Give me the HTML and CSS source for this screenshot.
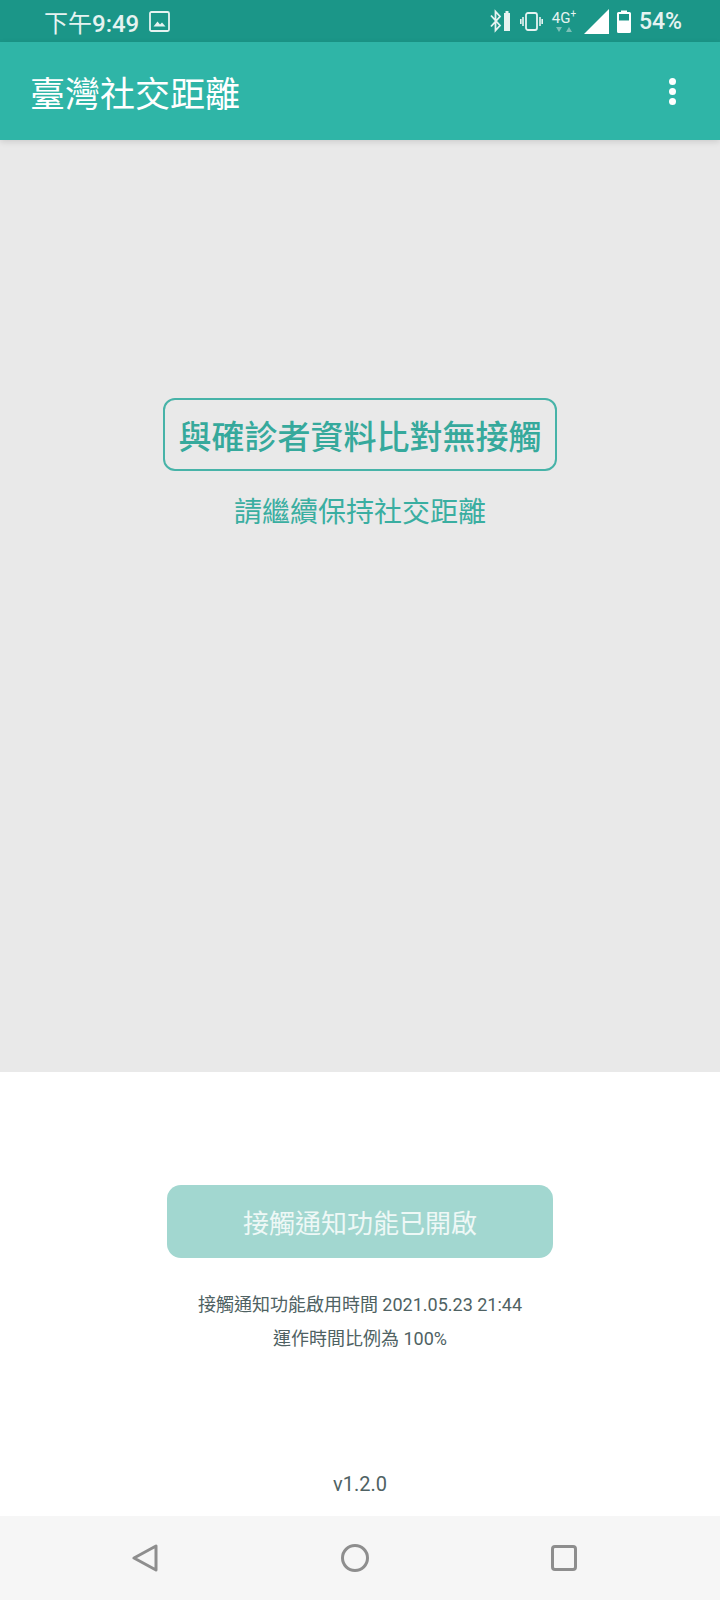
FILE: index.html
```html
<!DOCTYPE html>
<html lang="zh-Hant">
    <head>
        <meta charset="UTF-8">
        <meta name="viewport" content="width=device-width, initial-scale=1.0">
        <title>臺灣社交距離</title>
        <link rel="stylesheet" href="styles.css">
    </head>
    <body>
        <div class="status-bar">
            <div class="status-left">
                <span class="clock"><span class="clock-ampm">下午</span>9:49</span>
                <svg class="pic-icon" width="21" height="21" viewBox="0 0 21 21">
                    <rect x="1" y="1" width="19" height="19" rx="1.5" fill="none" stroke="#e6f3f1" stroke-width="1.8"/>
                    <path d="M4.5 15.5 L8.5 10.5 L11 13.5 L13 11.5 L16.5 15.5 Z" fill="#e6f3f1"/>
                </svg>
            </div>
            <div class="status-right">
                <svg width="21" height="24" viewBox="0 0 21 24">
                    <path d="M1 6.5 L10 16.5 L5.5 21.5 V2.5 L10 7.5 L1 17.5" fill="none" stroke="#e6f3f1" stroke-width="1.8"/>
                    <path d="M14 4 H15.5 V2 H18.5 V4 H20 V22 H14 Z" fill="#e6f3f1"/>
                </svg>
                <svg class="vibrate" width="23" height="19" viewBox="0 0 23 19">
                    <rect x="6" y="1" width="11" height="17" rx="2" fill="none" stroke="#e6f3f1" stroke-width="1.8"/>
                    <path d="M3 5 V14 M0.8 7 V12 M20 5 V14 M22.2 7 V12" stroke="#e6f3f1" stroke-width="1.6"/>
                </svg>
                <div class="net">
                    <span class="net-label">4G<sup>+</sup></span>
                    <svg width="16" height="6" viewBox="0 0 16 6">
                        <path d="M0 0 H6 L3 5 Z" fill="#7cc1b8"/>
                        <path d="M10 5 H16 L13 0 Z" fill="#7cc1b8"/>
                    </svg>
                </div>
                <svg class="signal" width="25" height="25" viewBox="0 0 25 25">
                    <path d="M25 0 V25 H0 Z" fill="#fff"/>
                </svg>
                <svg class="battery" width="14" height="23" viewBox="0 0 14 23">
                    <path d="M4 2 V0.5 H10 V2 H12.5 A1.5 1.5 0 0 1 14 3.5 V21.5 A1.5 1.5 0 0 1 12.5 23 H1.5 A1.5 1.5 0 0 1 0 21.5 V3.5 A1.5 1.5 0 0 1 1.500 2 Z" fill="#fff"/>
                    <rect x="2" y="4" width="10" height="6.5" fill="#1b9688"/>
                </svg>
                <span class="percent">54%</span>
            </div>
        </div>

        <div class="app-bar">
            <h1 class="app-title">臺灣社交距離</h1>
            <div class="menu">
                <span class="dot"></span>
                <span class="dot"></span>
                <span class="dot"></span>
            </div>
        </div>

        <div class="result-panel">
            <div class="result-box">與確診者資料比對無接觸</div>
            <p class="result-note">請繼續保持社交距離</p>
        </div>

        <div class="bottom-panel">
            <button class="notify-button" disabled>接觸通知功能已開啟</button>
            <p class="notify-info">接觸通知功能啟用時間 2021.05.23 21:44<br>運作時間比例為 100%</p>
            <p class="version">v1.2.0</p>
        </div>

        <div class="nav-bar">
            <svg width="26" height="28" viewBox="0 0 26 28">
                <path d="M2 14 L24 2 V26 Z" fill="none" stroke="#8e8e8e" stroke-width="3" stroke-linejoin="round"/>
            </svg>
            <svg width="28" height="28" viewBox="0 0 28 28">
                <circle cx="14" cy="14" r="12.500" fill="none" stroke="#8e8e8e" stroke-width="3"/>
            </svg>
            <svg width="26" height="26" viewBox="0 0 26 26">
                <rect x="1.500" y="1.500" width="23" height="23" rx="2.500" fill="none" stroke="#8e8e8e" stroke-width="3"/>
            </svg>
        </div>
    </body>
</html>
```

FILE: styles.css
```css
* {
    box-sizing: border-box;
}
body {
    font-family: Roboto, "Noto Sans CJK TC", sans-serif;
    margin: 0;
    width: 720px;
    height: 1600px;
    display: flex;
    flex-direction: column;
    background-color: #fff;
    overflow: hidden;
}
.status-bar {
    height: 42px;
    flex-shrink: 0;
    display: flex;
    justify-content: space-between;
    align-items: center;
    padding: 0 38px 0 44px;
    background-color: #1b9688;
    color: #e6f3f1;
}
.status-left {
    display: flex;
    align-items: center;
    gap: 10px;
}
.clock {
    font-size: 24px;
    font-weight: 500;
}
.clock-ampm {
    font-weight: 400;
}
.status-right {
    display: flex;
    align-items: center;
}
.vibrate {
    margin-left: 9px;
}
.net {
    display: flex;
    flex-direction: column;
    align-items: center;
    margin-left: 8px;
    width: 26px;
}
.net-label {
    font-size: 15px;
    line-height: 17px;
    white-space: nowrap;
}
.net-label sup {
    font-size: 10px;
    line-height: 0;
}
.signal {
    margin-left: 7px;
}
.battery {
    margin-left: 8px;
}
.percent {
    font-size: 23px;
    font-weight: 500;
    margin-left: 8px;
}
.app-bar {
    height: 98px;
    flex-shrink: 0;
    display: flex;
    justify-content: space-between;
    align-items: center;
    padding: 0 44px 0 30px;
    background-color: #2fb5a7;
    box-shadow: 0 2px 6px rgba(0, 0, 0, 0.12);
    position: relative;
}
.app-title {
    margin: 0;
    font-size: 35px;
    font-weight: 400;
    color: #fff;
}
.menu {
    display: flex;
    flex-direction: column;
    gap: 3px;
}
.dot {
    width: 7px;
    height: 7px;
    border-radius: 50%;
    background-color: #fff;
}
.result-panel {
    height: 932px;
    flex-shrink: 0;
    display: flex;
    flex-direction: column;
    align-items: center;
    padding-top: 258px;
    background-color: #e9e9e9;
}
.result-box {
    width: 394px;
    height: 73px;
    display: flex;
    justify-content: center;
    align-items: center;
    font-size: 33px;
    font-weight: 500;
    color: #36a99c;
    border: 2px solid #47b3a8;
    border-radius: 12px;
}
.result-note {
    margin: 22px 0 0;
    font-size: 28px;
    line-height: 40px;
    color: #3aaea1;
}
.bottom-panel {
    flex: 1;
    display: flex;
    flex-direction: column;
    align-items: center;
    padding-top: 113px;
}
.notify-button {
    width: 386px;
    height: 73px;
    font-family: inherit;
    font-size: 26px;
    color: #eef8f6;
    background-color: #a2d7d0;
    border: none;
    border-radius: 14px;
}
.notify-info {
    margin: 30px 0 0;
    font-size: 18px;
    line-height: 34px;
    text-align: center;
    color: #4f6263;
}
.version {
    margin: auto 0 20px;
    font-size: 20px;
    color: #4f6263;
}
.nav-bar {
    height: 84px;
    flex-shrink: 0;
    display: flex;
    justify-content: space-between;
    align-items: center;
    padding: 0 143px 0 132px;
    background-color: #f6f6f6;
}
```
